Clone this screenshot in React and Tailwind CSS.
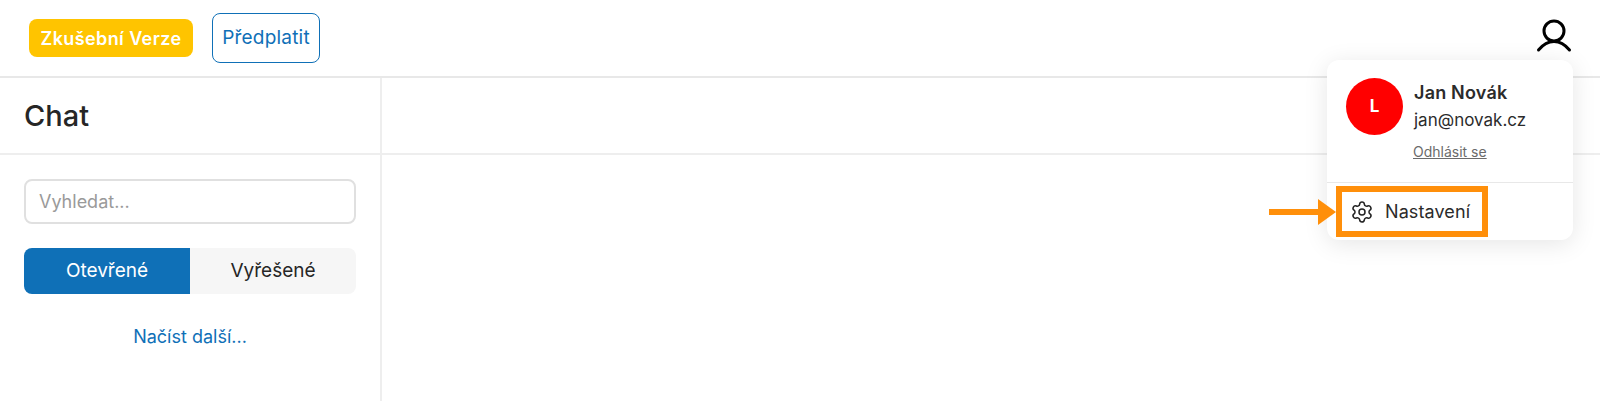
import { Settings } from 'lucide-react';

const font = { fontFamily: '"Inter", "Noto Sans", sans-serif' };

function UserIcon() {
  return (
    <svg width="36" height="34" viewBox="0 0 36 34" fill="none" stroke="#000" strokeWidth="3" strokeLinecap="round">
      <circle cx="18" cy="12" r="10" />
      <path d="M2.5 31 C7 25.500 12 22.500 18 22.500 C24 22.500 29 25.500 33.500 31" />
    </svg>
  );
}

function ProfileMenu() {
  return (
    <div className="absolute left-[1327px] top-[60px] w-[246px] h-[180px] bg-white rounded-xl shadow-[0_4px_24px_rgba(0,0,0,0.1)]">
      <div className="h-[123px] border-b border-[#e8e8e8] flex pl-[19px] pt-[18px]">
        <div className="w-[57px] h-[57px] rounded-full bg-[#ff0000] text-white flex items-center justify-center text-[17px] font-bold">L</div>
        <div className="ml-[11px] flex flex-col items-start">
          <div className="text-[18px] leading-6 font-semibold tracking-[0.2px] text-[#2b2b2b] mt-[3px]">Jan Novák</div>
          <div className="text-[17px] leading-6 text-[#2b2b2b] mt-[3px]">jan@novak.cz</div>
          <a className="text-[14px] leading-5 -ml-[1px] text-[#6b6b6b] underline mt-[10px]">Odhlásit se</a>
        </div>
      </div>
      <div className="ml-[9px] mt-[3px] w-[152px] h-[51px] border-[6px] border-[#ff8f0a] flex items-center pl-[8px] gap-[11px]">
        <Settings size={24} strokeWidth={1.5} color="#222" />
        <span className="text-[18px] tracking-[0.1px] text-[#2b2b2b]">Nastavení</span>
      </div>
      <svg className="absolute left-[-58px] top-[138px]" width="68" height="28" viewBox="0 0 68 28" fill="#ff8f0a">
        <rect x="0" y="11" width="52" height="6" />
        <path d="M49 1 L67 14 L49 27 Z" />
      </svg>
    </div>
  );
}

export default function App() {
  return (
    <div className="relative w-[1600px] h-[401px] overflow-hidden bg-white" style={font}>
      <header className="h-[78px] border-b-2 border-[#e8e8e8] flex items-start justify-between">
        <div className="flex items-start pl-[29px] pt-[13px] gap-[19px]">
          <div className="mt-[6px] w-[164px] h-[38px] rounded-lg bg-[#ffc400] text-white text-[18px] font-semibold tracking-[0.4px] flex items-center justify-center">Zkušební Verze</div>
          <button className="w-[108px] h-[50px] rounded-lg border border-[#0f70b7] text-[#0f70b7] text-[19px] tracking-[0.2px] flex items-center justify-center">Předplatit</button>
        </div>
        <div className="pt-[19px] pr-[28px]"><UserIcon /></div>
      </header>
      <div className="flex h-[323px]">
        <aside className="w-[382px] shrink-0 border-r-2 border-[#eeeeee]">
          <div className="h-[77px] border-b-2 border-[#eeeeee] flex items-center pl-[24px] text-[29px] font-medium text-[#262626]">Chat</div>
          <div className="px-[24px] pt-[24px]">
            <div className="h-[45px] border-2 border-[#e0e0e0] rounded-lg flex items-center pl-[13px] text-[18px] text-[#9a9a9a]">Vyhledat...</div>
            <div className="mt-[24px] h-[46px] flex rounded-lg overflow-hidden text-[19px]">
              <div className="w-[166px] bg-[#0f70b7] text-white flex items-center justify-center">Otevřené</div>
              <div className="w-[166px] bg-[#f6f6f6] text-[#262626] flex items-center justify-center">Vyřešené</div>
            </div>
            <div className="mt-[31px] text-center text-[18px] leading-6 text-[#0f70b7]">Načíst další...</div>
          </div>
        </aside>
        <main className="flex-1">
          <div className="h-[77px] border-b-2 border-[#eeeeee]" />
        </main>
      </div>
      <ProfileMenu />
    </div>
  );
}
